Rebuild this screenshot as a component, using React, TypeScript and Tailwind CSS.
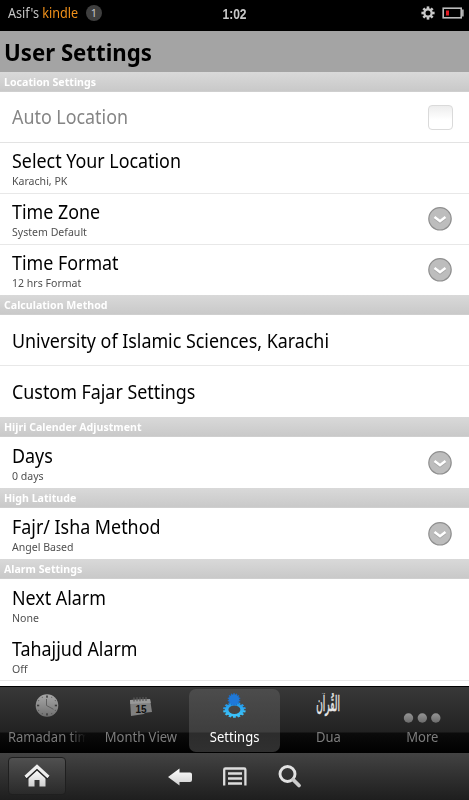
import type { ReactNode } from "react";

function Title({ children }: { children: ReactNode }) {
  return <div className="origin-left scale-x-[0.94] text-[19px] leading-[24px] whitespace-nowrap">{children}</div>;
}

function Section({ children }: { children: ReactNode }) {
  return (
    <div className="h-5 shrink-0 border-b border-[#cfcfcf] bg-gradient-to-b from-[#d9d9d9] to-[#c9c9c9] pl-1 text-[11px] leading-[19px] font-bold text-white">
      <span className="inline-block origin-left scale-x-[0.965]">{children}</span>
    </div>
  );
}

function Chevron() {
  return (
    <svg width="24" height="24" viewBox="0 0 24 24" className="mr-[17px]">
      <circle cx="12" cy="11.800" r="11.200" fill="#bdbdbd" stroke="#8f8f8f" strokeWidth="1.200" />
      <path d="M6.500 11l5.500 4.200 5.500-4.200" fill="none" stroke="#a3a3a3" strokeWidth="2.400" />
      <path d="M6.500 10l5.500 4.200 5.500-4.200" fill="none" stroke="#fff" strokeWidth="2.600" />
    </svg>
  );
}

type RowProps = { title: string; sub?: string; line?: boolean; chevron?: boolean; h?: string; pad?: string };

function Row({ title, sub, line, chevron, h = "h-[51px]", pad = "pt-[2px]" }: RowProps) {
  return (
    <div className={`${h} flex shrink-0 items-center justify-between pl-3 ${line ? "border-b border-[#e8e8e8]" : ""}`}>
      <div className={pad}>
        <Title>{title}</Title>
        {sub && <div className="origin-left scale-x-[0.96] text-[11px] leading-[15px] text-[#505050]">{sub}</div>}
      </div>
      {chevron && <Chevron />}
    </div>
  );
}

const teeth = (n: number) => Array.from({ length: n }, (_, i) => (i * 360) / n);

function StatusGear() {
  return (
    <svg width="14" height="14" viewBox="-7 -7 14 14" className="mr-[7px]">
      {teeth(8).map((a) => (
        <rect key={a} x="-1.3" y="-6.6" width="2.6" height="3" fill="#c8c8c8" transform={`rotate(${a})`} />
      ))}
      <circle r="3.6" fill="none" stroke="#c8c8c8" strokeWidth="2.2" />
    </svg>
  );
}

type TabProps = { label: string; icon: ReactNode; active?: boolean; fade?: boolean };

function Tab({ label, icon, active, fade }: TabProps) {
  return (
    <div
      className={`mx-[1px] mt-[2px] flex h-[63px] flex-1 flex-col items-center overflow-hidden ${
        active ? "rounded-[7px] bg-[linear-gradient(#4c4c4c,#3e3e3e_43px,#2c2c2c_44px,#303030)] text-white" : "text-[#7d7d7d]"
      }`}
    >
      <div className="flex h-[38px] w-full items-start justify-center pt-[4px]">{icon}</div>
      <div className="flex w-[77px] justify-center text-[14px] leading-[20px] whitespace-nowrap">
        {fade ? (
          <span className="w-[84px] shrink-0 scale-x-[0.93] bg-gradient-to-r from-[#7d7d7d] from-78% to-transparent bg-clip-text text-transparent">
            {label}
          </span>
        ) : (
          <span className="scale-x-[0.93]">{label}</span>
        )}
      </div>
    </div>
  );
}

function ClockIcon() {
  return (
    <svg width="24" height="24" viewBox="-12 -12 24 24">
      <defs>
        <linearGradient id="clk" x1="0" x2="0" y1="0" y2="1">
          <stop offset="0" stopColor="#a8a8a8" />
          <stop offset="1" stopColor="#707070" />
        </linearGradient>
      </defs>
      <circle r="11.3" cy="0.500" fill="url(#clk)" />
      <g transform="translate(0 .5)">
        {teeth(12).map((a) => (
          <rect key={a} x={a % 90 === 0 ? -0.8 : -0.4} y="-10" width={a % 90 === 0 ? 1.6 : 0.8} height={a % 90 === 0 ? 2.2 : 0.9} fill="#3b3b3b" transform={`rotate(${a})`} />
        ))}
        <path d="M-.5-6.500V0L6.500 3.800" fill="none" stroke="#5a5a5a" strokeWidth=".9" />
      </g>
    </svg>
  );
}

function CalendarIcon() {
  return (
    <svg width="24" height="26" viewBox="0 0 24 26">
      <g transform="translate(0 1)">
        <path d="M1 6l20-1 2 13-7 .8-1 1.200L2 22z" fill="#808080" />
        <path d="M1 6l20-1 .8 4L1.300 10z" fill="#999" />
        <path d="M5 3.500v4M8 3.300v4M11 3.200v4M14 3.100v4M17 3v4" stroke="#595959" strokeWidth="1.200" />
        <text x="6.500" y="18.500" fontSize="10" fontWeight="bold" fill="#111" fontFamily="Liberation Sans, sans-serif">15</text>
      </g>
    </svg>
  );
}

function GearsIcon() {
  return (
    <svg width="24" height="26" viewBox="0 0 24 26" className="overflow-visible">
      <defs>
        <linearGradient id="gr" x1="0" x2="0" y1="0" y2="1">
          <stop offset="0" stopColor="#239bea" />
          <stop offset="1" stopColor="#3cc3fa" />
        </linearGradient>
      </defs>
      <g transform="translate(12.4 16.8) scale(1 .7)">
        {teeth(14).map((a) => (
          <rect key={a} x="-1.4" y="-11.400" width="2.800" height="4" fill={a > 90 && a < 270 ? "#3abff8" : "#2799e8"} transform={`rotate(${a})`} />
        ))}
        <circle r="7.800" fill="none" stroke="url(#gr)" strokeWidth="3.600" />
      </g>
      <g transform="translate(12 6.500)">
        {teeth(14).map((a) => (
          <rect key={a} x="-.7" y="-6.400" width="1.400" height="2" fill="#1b70cc" transform={`rotate(${a})`} />
        ))}
        <circle r="5.200" fill="#1f78d8" />
      </g>
    </svg>
  );
}

function QuranIcon() {
  return (
    <svg width="36" height="30" viewBox="0 0 36 30">
      <g transform="translate(18 17.500) scale(0.56 1.35)">
        <text textAnchor="middle" fontSize="16" fill="#e6e6e6" stroke="#e6e6e6" strokeWidth="0.4" fontFamily="DejaVu Sans, sans-serif">
          القُرآن
        </text>
      </g>
    </svg>
  );
}

function MoreIcon() {
  return (
    <svg width="38" height="12" viewBox="0 0 38 12" className="mt-[19px]">
      <defs>
        <linearGradient id="dot" x1="0" x2="0" y1="0" y2="1">
          <stop offset="0" stopColor="#949494" />
          <stop offset="1" stopColor="#6c6c6c" />
        </linearGradient>
      </defs>
      {[5.5, 19.3, 32.8].map((x) => (
        <circle key={x} cx={x} cy="6" r="4.7" fill="url(#dot)" />
      ))}
    </svg>
  );
}

export default function App() {
  return (
    <div className="flex h-[800px] w-[469px] flex-col overflow-hidden bg-white font-['Noto_Sans',sans-serif] text-black">
      <header className="grid h-[31px] shrink-0 grid-cols-3 items-center bg-black pb-[5px]">
        <div className="flex items-center pl-2 text-[13.500px] text-[#c4c4c4]">
          <span className="flex w-[78px] shrink-0">
            <span className="flex origin-left scale-x-[0.935] whitespace-nowrap">
              Asif's&nbsp;<span className="text-[#f0901a]">kindle</span>
            </span>
          </span>
          <span className="flex size-4 items-center justify-center rounded-full bg-[#3f3f3f] text-[11px] text-[#c5c5c5]">1</span>
        </div>
        <div className="text-center">
          <span className="inline-block scale-x-[0.83] font-['Liberation_Sans',sans-serif] text-[14.500px] leading-[20px] font-bold text-[#c8c8c8]">1:02</span>
        </div>
        <div className="flex items-center justify-end pr-[5px]">
          <StatusGear />
          <svg width="22" height="12" viewBox="0 0 22 12">
            <rect x="1.200" y="1.200" width="18" height="9.600" fill="#000" stroke="#bbb" strokeWidth="1.600" />
            <rect x="20" y="2.500" width="1.700" height="7" fill="#aaa" />
            <rect x="4" y="3.500" width="3" height="5" fill="#e21b23" />
          </svg>
        </div>
      </header>
      <h1 className="h-[41px] shrink-0 bg-[#a4a4a4] pl-[4px] text-[24px] leading-[42px] font-bold">
        <span className="inline-block origin-left scale-x-[0.925]">User Settings</span>
      </h1>

      <main className="flex h-[614px] shrink-0 flex-col overflow-hidden">
        <Section>Location Settings</Section>
        <div className="flex h-[51px] shrink-0 items-center justify-between border-b border-[#e3e3e3] pl-3 text-[#858585]">
          <Title>Auto Location</Title>
          <div className="mr-4 size-[25px] rounded-[4px] border border-[#dadada] bg-gradient-to-b from-[#ededed] to-white to-60%" />
        </div>
        <Row title="Select Your Location" sub="Karachi, PK" line pad="pt-[1px]" />
        <Row title="Time Zone" sub="System Default" line chevron pad="pt-[1px]" />
        <Row title="Time Format" sub="12 hrs Format" chevron h="h-[50px]" pad="pt-[1px]" />
        <Section>Calculation Method</Section>
        <Row title="University of Islamic Sciences, Karachi" line />
        <Row title="Custom Fajar Settings" pad="pt-[1px]" />
        <Section>Hijri Calender Adjustment</Section>
        <Row title="Days" sub="0 days" chevron />
        <Section>High Latitude</Section>
        <Row title="Fajr/ Isha Method" sub="Angel Based" chevron />
        <Section>Alarm Settings</Section>
        <Row title="Next Alarm" sub="None" />
        <Row title="Tahajjud Alarm" sub="Off" line />
      </main>

      <nav className="flex h-[67px] shrink-0 border-t border-black bg-[linear-gradient(#383838,#222_45px,#0b0b0b_46px,#000)]">
        <Tab label="Ramadan tim" icon={<ClockIcon />} fade />
        <Tab label="Month View" icon={<CalendarIcon />} />
        <Tab label="Settings" icon={<GearsIcon />} active />
        <Tab label="Dua" icon={<QuranIcon />} />
        <Tab label="More" icon={<MoreIcon />} />
      </nav>

      <footer className="flex h-[47px] shrink-0 bg-gradient-to-b from-[#434343] to-[#1e1e1e] pt-1">
        <div className="ml-2 flex h-[38px] w-[58px] items-center justify-center rounded-[4px] border border-[#1f1f1f] bg-gradient-to-b from-[#505050] to-[#2a2a2a]">
          <svg width="26" height="24" viewBox="0 0 26 24">
            <defs>
              <linearGradient id="wh" x1="0" x2="0" y1="0" y2="1">
                <stop offset="0" stopColor="#fff" />
                <stop offset="1" stopColor="#cfcfcf" />
              </linearGradient>
            </defs>
            <path d="M4.500 13L13 5.500l8.500 7.500v9.500h-6V16h-5v6.500h-6z" fill="url(#wh)" />
            <path d="M1.500 14L13 3.500l11.500 10.500" fill="none" stroke="#222" strokeWidth="4.500" />
            <path d="M1.500 13L13 2.500 24.500 13" fill="none" stroke="#eee" strokeWidth="3.200" />
          </svg>
        </div>
        <svg width="26" height="20" viewBox="0 0 26 20" className="mt-[10px] ml-[101px]">
          <path d="M1 10L12.500 1.500V5.500H23Q25 5.500 25 7.500V13Q25 15 23 15H12.500V18.500z" fill="url(#wh)" />
        </svg>
        <svg width="26" height="20" viewBox="0 0 26 20" className="mt-[10px] ml-[29px]">
          <path d="M2.200 18.500V2.700Q2.200 1.500 3.400 1.500H22.200Q23.400 1.500 23.400 2.700V18.500" fill="none" stroke="#ddd" strokeWidth="2.300" />
          <path d="M6 6.500H20M6 11.500H20M6 16.500H20" stroke="#ddd" strokeWidth="2.700" />
        </svg>
        <svg width="24" height="24" viewBox="0 0 24 24" className="mt-[8px] ml-[30px]">
          <circle cx="9.500" cy="9" r="7.500" fill="none" stroke="#e2e2e2" strokeWidth="2.900" />
          <path d="M15 14.500L21 20.500" stroke="#ccc" strokeWidth="3.800" strokeLinecap="round" />
        </svg>
      </footer>
    </div>
  );
}
